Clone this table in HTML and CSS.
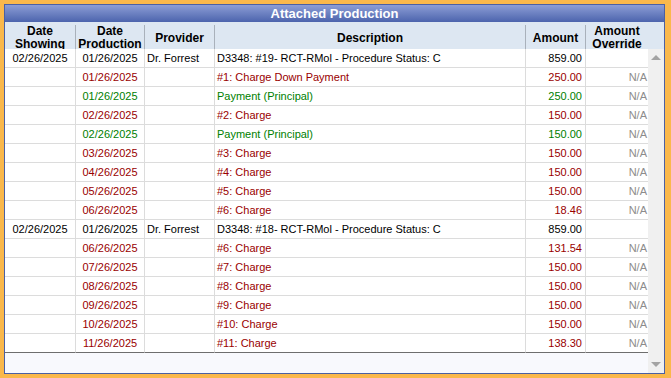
FILE: index.html
```html
<!DOCTYPE html>
<html lang="en">
<head>
  <meta charset="UTF-8" />
  <title>Attached Production</title>
  <link rel="stylesheet" href="styles.css">
</head>
<body>
  <div class="panel">
    <div class="title">Attached Production</div>
    <div class="head">
      <div class="hcell"><span>Date<br>Showing</span></div>
      <div class="hcell"><span>Date<br>Production</span></div>
      <div class="hcell"><span>Provider</span></div>
      <div class="hcell"><span>Description</span></div>
      <div class="hcell"><span>Amount</span></div>
      <div class="hcell last"><span>Amount<br>Override</span></div>
      <div class="hpad"></div>
    </div>
    <div class="body">
      <div class="rows" id="rows"></div>
      <div class="scroll">
        <span class="arrow up"></span>
        <span class="arrow down"></span>
      </div>
    </div>
  </div>

  <script>
    // showing, production, provider, description, amount, override, kind
    const rows = [
      ['02/26/2025', '01/26/2025', 'Dr. Forrest', 'D3348: #19- RCT-RMol - Procedure Status: C', '859.00', '', 'proc'],
      ['', '01/26/2025', '', '#1: Charge Down Payment', '250.00', 'N/A', 'charge'],
      ['', '01/26/2025', '', 'Payment (Principal)', '250.00', 'N/A', 'pay'],
      ['', '02/26/2025', '', '#2: Charge', '150.00', 'N/A', 'charge'],
      ['', '02/26/2025', '', 'Payment (Principal)', '150.00', 'N/A', 'pay'],
      ['', '03/26/2025', '', '#3: Charge', '150.00', 'N/A', 'charge'],
      ['', '04/26/2025', '', '#4: Charge', '150.00', 'N/A', 'charge'],
      ['', '05/26/2025', '', '#5: Charge', '150.00', 'N/A', 'charge'],
      ['', '06/26/2025', '', '#6: Charge', '18.46', 'N/A', 'charge'],
      ['02/26/2025', '01/26/2025', 'Dr. Forrest', 'D3348: #18- RCT-RMol - Procedure Status: C', '859.00', '', 'proc'],
      ['', '06/26/2025', '', '#6: Charge', '131.54', 'N/A', 'charge'],
      ['', '07/26/2025', '', '#7: Charge', '150.00', 'N/A', 'charge'],
      ['', '08/26/2025', '', '#8: Charge', '150.00', 'N/A', 'charge'],
      ['', '09/26/2025', '', '#9: Charge', '150.00', 'N/A', 'charge'],
      ['', '10/26/2025', '', '#10: Charge', '150.00', 'N/A', 'charge'],
      ['', '11/26/2025', '', '#11: Charge', '138.30', 'N/A', 'charge']
    ];

    const list = document.getElementById('rows');
    const aligns = ['center', 'center', 'left', 'left', 'right', 'na'];

    rows.forEach(r => {
      const row = document.createElement('div');
      row.className = 'row ' + r[6];
      for (let i = 0; i < 6; i++) {
        const cell = document.createElement('div');
        cell.className = 'cell ' + aligns[i];
        cell.textContent = r[i];
        row.appendChild(cell);
      }
      list.appendChild(row);
    });
  </script>
</body>
</html>
```

FILE: styles.css
```css
body {
  margin: 0;
  width: 671px;
  height: 378px;
  background-color: #fab84b;
  padding: 4px 6px 4px 4px;
  box-sizing: border-box;
  font-family: "Liberation Sans", Arial, sans-serif;
}
.panel {
  border: 1px solid #4b60a3;
  height: 370px;
  box-sizing: border-box;
  display: flex;
  flex-direction: column;
  background-color: #f8f9fd;
}
.title {
  height: 17px;
  line-height: 17px;
  background: linear-gradient(#8c9dd5, #4c64ad);
  color: #fff;
  font-weight: bold;
  font-size: 13px;
  text-align: center;
}
.head {
  display: grid;
  grid-template-columns: 71px 69px 70px 311px 60px 62px 16px;
  height: 27px;
  background-color: #dde7f2;
  font-size: 12px;
  font-weight: bold;
  color: #000;
}
.hcell {
  display: flex;
  align-items: center;
  justify-content: center;
  text-align: center;
  margin: 3px 0 2px;
  border-right: 1px solid #a9b1bb;
}
.hcell span {
  line-height: 13px;
}
.hcell.last {
  border-right: none;
}
.body {
  display: flex;
  flex: 1;
}
.rows {
  width: 643px;
}
.row {
  display: grid;
  grid-template-columns: 71px 69px 70px 311px 60px 62px;
  height: 19px;
  background-color: #fff;
  font-size: 11px;
}
.row:last-child .cell {
  border-bottom-color: #6e6e6e;
}
.cell {
  border-right: 1px solid #dcdcdc;
  border-bottom: 1px solid #dcdcdc;
  line-height: 18px;
  white-space: nowrap;
  overflow: hidden;
  padding: 0 2px;
}
.cell.center {
  text-align: center;
}
.cell.right {
  text-align: right;
  padding-right: 3px;
}
.cell.na {
  text-align: right;
  border-right: none;
  color: #8c8c8c;
  padding-right: 1px;
}
.row.proc {
  color: #000;
}
.row.charge .cell:not(.na) {
  color: #990000;
}
.row.pay .cell:not(.na) {
  color: #008000;
}
.scroll {
  width: 16px;
  background-color: #f0f0f0;
  display: flex;
  flex-direction: column;
  justify-content: space-between;
  align-items: center;
  padding: 6px 0;
}
.arrow {
  width: 0;
  height: 0;
  border-left: 5px solid transparent;
  border-right: 5px solid transparent;
}
.arrow.up {
  border-bottom: 5px solid #a3a3a3;
}
.arrow.down {
  border-top: 5px solid #a3a3a3;
}
```
